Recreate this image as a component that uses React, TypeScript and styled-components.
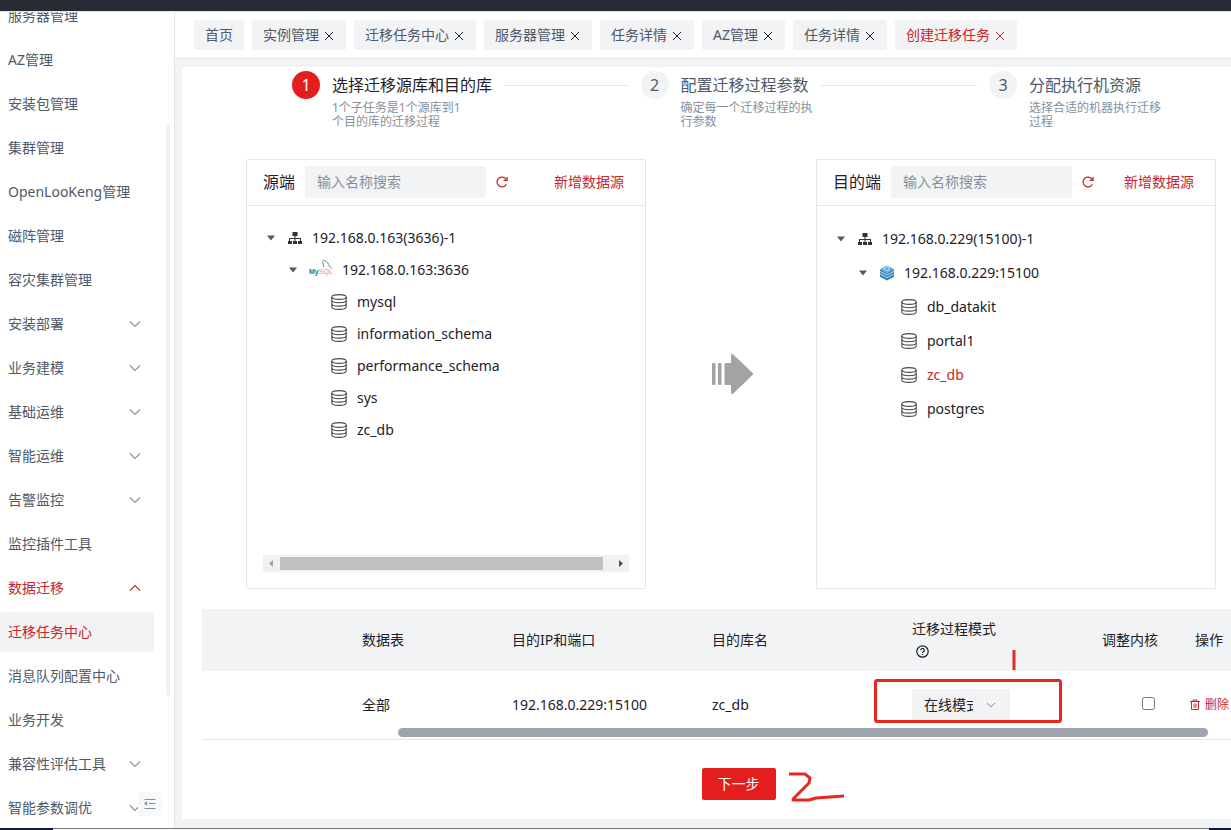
import React from 'react';
import styled, { createGlobalStyle } from 'styled-components';

const red = '#c9252d';
const primary = '#e41d1d';
const ink = '#1d2129';
const body = '#4e5969';
const muted = '#86909c';
const fill = '#f2f3f5';
const line = '#e5e6eb';
const mark = '#e8281f';

const GlobalStyle = createGlobalStyle`
  * { box-sizing: border-box; }
  body {
    margin: 0;
    background: #fff;
    color: ${ink};
    font: 14px/22px "Noto Sans", "Noto Sans CJK SC", sans-serif;
  }
  button, input, select { font: inherit; color: inherit; }
  button { border: 0; padding: 0; background: none; cursor: pointer; }
  a { text-decoration: none; color: inherit; }
  svg { display: block; flex: none; }
`;

const Shell = styled.div`
  display: flex;
  flex-direction: column;
  height: 100vh;
  overflow: hidden;
`;

const TopBar = styled.header`
  flex: none;
  height: 12px;
  background: #282a33;
  border-bottom: 1px solid ${line};
`;

const Columns = styled.div`
  flex: 1;
  display: flex;
  min-height: 0;
`;

const BottomEdge = styled.footer`
  flex: none;
  display: flex;
  justify-content: space-between;
  height: 2px;
  border-top: 1px solid #77787b;
`;

const EdgeBit = styled.span<{ $w: number }>`
  width: ${p => p.$w}px;
  height: 2px;
  margin-top: -1px;
  background: #101a30;
`;

const Sidebar = styled.aside`
  position: relative;
  flex: none;
  width: 175px;
  overflow: hidden;
  border-right: 1px solid ${line};
`;

const Menu = styled.ul`
  list-style: none;
  margin: -16px 19px 0 0;
  padding: 0;
`;

const MenuLink = styled.a<{ $active?: boolean; $selected?: boolean }>`
  display: flex;
  align-items: center;
  justify-content: space-between;
  height: 40px;
  margin: 0 1px 4px 0;
  padding: 0 12px 0 8px;
  border-radius: 0 2px 2px 0;
  color: ${p => (p.$active ? red : body)};
  background: ${p => (p.$selected ? fill : 'transparent')};
  svg { color: ${p => (p.$active ? red : muted)}; }
`;

const SideThumb = styled.div`
  position: absolute;
  top: 112px;
  right: 4px;
  width: 4px;
  height: 572px;
  border-radius: 2px;
  background: ${fill};
`;

const Collapse = styled.button`
  position: absolute;
  right: 12px;
  bottom: 12px;
  display: grid;
  place-items: center;
  width: 24px;
  height: 24px;
  border-radius: 2px;
  background: #f7f8fa;
  color: ${muted};
`;

const Main = styled.main`
  flex: 1;
  display: flex;
  flex-direction: column;
  min-width: 0;
  background: ${fill};
`;

const Tabs = styled.nav`
  display: flex;
  gap: 8px;
  flex: none;
  height: 47px;
  padding: 8px 19px;
  background: #fff;
  border-bottom: 1px solid ${line};
`;

const Tab = styled.button<{ $active?: boolean }>`
  display: flex;
  align-items: center;
  gap: 4px;
  flex: none;
  height: 30px;
  padding: 0 11px;
  border-radius: 2px;
  background: ${fill};
  color: ${p => (p.$active ? red : body)};
  svg { color: ${p => (p.$active ? red : ink)}; }
`;

const Panel = styled.section`
  flex: 1;
  display: flex;
  flex-direction: column;
  margin: 8px 0 9px 7px;
  padding-top: 4px;
  background: #fff;
  border-radius: 2px 0 0 2px;
`;

const Steps = styled.ol`
  display: grid;
  grid-template-columns: 1fr 1fr 242px;
  list-style: none;
  margin: 0;
  padding: 0 0 0 110px;
`;

const Step = styled.li`
  display: flex;
  gap: 12px;
`;

const StepNumber = styled.span<{ $active?: boolean }>`
  flex: none;
  width: 28px;
  height: 28px;
  border-radius: 50%;
  font-size: 16px;
  line-height: 28px;
  text-align: center;
  background: ${p => (p.$active ? primary : fill)};
  color: ${p => (p.$active ? '#fff' : body)};
`;

const StepBody = styled.div`
  flex: 1;
`;

const StepTitle = styled.div<{ $active?: boolean }>`
  display: flex;
  align-items: center;
  gap: 12px;
  padding-right: 12px;
  height: 28px;
  font-size: 16px;
  white-space: nowrap;
  color: ${p => (p.$active ? ink : body)};
`;

const StepLine = styled.span`
  flex: 1;
  height: 1px;
  background: ${line};
`;

const StepNote = styled.p`
  width: 140px;
  margin: 2px 0 0;
  font-size: 12px;
  line-height: 14px;
  color: ${muted};
`;

const Transfer = styled.div`
  display: flex;
  align-items: center;
  justify-content: space-between;
  margin: 30px 15px 20px 64px;
`;

const Card = styled.section`
  flex: 0 1 400px;
  display: flex;
  flex-direction: column;
  height: 430px;
  border: 1px solid ${line};
  border-radius: 2px;
`;

const CardHead = styled.div`
  display: flex;
  align-items: center;
  gap: 10px;
  height: 46px;
  padding: 0 21px 2px 16px;
  border-bottom: 1px solid ${line};
`;

const CardLabel = styled.label`
  font-size: 16px;
  line-height: 24px;
  white-space: nowrap;
`;

const Search = styled.input`
  width: 181px;
  height: 32px;
  padding: 0 12px;
  border: 0;
  border-radius: 2px;
  background: ${fill};
  &::placeholder { color: ${muted}; opacity: 1; }
`;

const RefreshButton = styled.button`
  color: ${red};
`;

const AddLink = styled.a`
  margin-left: auto;
  color: ${red};
  white-space: nowrap;
`;

const CardBody = styled.div`
  flex: 1;
  display: flex;
  flex-direction: column;
  justify-content: space-between;
  padding: 16px;
`;

const Tree = styled.ul`
  list-style: none;
  margin: 0;
  padding: 0;
`;

const TreeRow = styled.li<{ $level: number; $tall?: boolean; $on?: boolean }>`
  display: flex;
  align-items: center;
  gap: 10px;
  height: ${p => (p.$tall ? 34 : 32)}px;
  padding-left: ${p => [4, 26, 68][p.$level]}px;
  color: ${p => (p.$on ? red : ink)};
`;

const Toggle = styled.button`
  width: 11px;
`;

const ScrollTrack = styled.div`
  display: flex;
  align-items: center;
  height: 17px;
  background: #f1f1f1;
`;

const ScrollThumb = styled.div`
  flex: 1;
  height: 13px;
  margin-right: 9px;
  background: #c1c1c1;
`;

const TableWrap = styled.div`
  position: relative;
  margin-left: 20px;
  border-bottom: 1px solid ${line};
`;

const Table = styled.table`
  width: 100%;
  table-layout: fixed;
  border-collapse: collapse;
  text-align: left;
  white-space: nowrap;
  th {
    height: 62px;
    padding: 0 0 0 16px;
    font-weight: 400;
    background: ${fill};
  }
  td {
    height: 68px;
    padding: 0 0 0 16px;
  }
`;

const HelpButton = styled.button`
  display: block;
  margin-left: 4px;
  height: 22px;
`;

const ModeField = styled.div`
  position: relative;
  width: 98px;
`;

const ModeSelect = styled.select`
  display: block;
  width: 98px;
  height: 32px;
  padding: 0 37px 0 12px;
  border: 0;
  border-radius: 2px;
  appearance: none;
  background: ${fill};
`;

const ModeArrow = styled.span`
  position: absolute;
  top: 10px;
  right: 13px;
  color: ${muted};
  pointer-events: none;
`;

const Highlight = styled.div`
  position: absolute;
  top: -10px;
  left: -38px;
  width: 188px;
  height: 44px;
  border: 3px solid ${mark};
  border-radius: 3px;
`;

const Stroke = styled.svg`
  position: absolute;
  top: -40px;
  left: 100px;
`;

const KernelCheck = styled.input`
  display: block;
  width: 13px;
  height: 13px;
  margin: 0 0 4px 40px;
`;

const DeleteButton = styled.button`
  display: flex;
  align-items: center;
  gap: 5px;
  margin-left: -5px;
  font-size: 12px;
  color: ${red};
`;

const TableThumb = styled.div`
  position: absolute;
  right: 23px;
  bottom: 2px;
  width: 79%;
  max-width: 810px;
  height: 9px;
  border-radius: 5px;
  background: #9da5af;
`;

const Actions = styled.div`
  display: flex;
  justify-content: center;
  align-items: flex-start;
  gap: 12px;
  padding: 28px 0 0 134px;
`;

const Next = styled.button`
  width: 74px;
  height: 32px;
  border-radius: 2px;
  background: ${primary};
  color: #fff;
`;

const Chevron = ({ up }: { up?: boolean }) => (
  <svg width="14" height="12" viewBox="0 0 14 12" fill="none" stroke="currentColor" strokeWidth="1.1">
    <path d={up ? 'M2 8.5 7 3.5l5 5' : 'M2 3.5l5 5 5-5'} />
  </svg>
);

const Cross = () => (
  <svg width="12" height="12" viewBox="0 0 12 12" stroke="currentColor">
    <path d="M2 3l8 8M10 3l-8 8" />
  </svg>
);

const Refresh = () => (
  <svg width="12" height="12" viewBox="0 0 12 12" fill="none" stroke="currentColor" strokeWidth="1.3">
    <path d="M10.3 8.2A4.9 4.9 0 1 1 10.2 3.6" />
    <path d="M11.1 1v3.4H7.6" />
  </svg>
);

const Caret = () => (
  <Toggle aria-label="展开或收起">
    <svg width="8" height="6" viewBox="0 0 8 6" fill={body}><path d="M0 .5h8L4 5.5z" /></svg>
  </Toggle>
);

const Cluster = () => (
  <svg width="14" height="14" viewBox="0 0 14 14" fill="#303133">
    <path d="M4.500 1h5v4H7.500v2h5.500v3h1v3h-4v-3h2V8H7.500v2H9v3H5v-3h1.500V8H2v2h2v3H0v-3h1V7h5.500V5h-2z" />
  </svg>
);

const MysqlLogo = () => (
  <svg width="22" height="22" viewBox="0 0 22 22" fill="none" overflow="visible">
    <text x="-1" y="15" fontFamily="Liberation Sans, sans-serif" fontSize="7" fontWeight="700" fill="#1f7a8c">
      My<tspan fill="#eb9a3c" fontWeight="400">SQL</tspan>
    </text>
    <path stroke="#4a93a3" d="M13.500 8c.2-2.500-.8-3.500-.9-5.500.2-1.500 1.500-1.500 2.500-.6 2.300.7 3.700 3 4.200 5.100.7.900 1.700 1.400 2.200 2.500" />
  </svg>
);

const GaussLogo = () => (
  <svg width="14" height="16" viewBox="0 0 14 16">
    <path fill="#2c82b8" d="M0 4.200 7 8l7-3.800v7.600L7 15.600 0 11.800z" />
    <path fill="#4ba6d8" d="M7 .4 14 4.200 7 8 0 4.200z" />
    <path fill="none" stroke="#e6f5fc" strokeWidth=".8" d="M0 6.400 7 10l7-3.600M0 9 7 12.600 14 9M9.500 2.600 7 1.700 3.600 4 7 5.900l2.600-1.500-2-.9" />
  </svg>
);

const Database = () => (
  <svg width="16" height="16" viewBox="0 0 16 16" fill="none" stroke="#4a4a4a" strokeWidth="1.100">
    <ellipse cx="8" cy="3" rx="7.200" ry="2.400" />
    <path d="M.8 3v10c0 1.300 3.200 2.400 7.200 2.400s7.200-1.100 7.200-2.400V3M.8 6.300c0 1.300 3.200 2.400 7.200 2.400s7.200-1.100 7.200-2.400M.8 9.700c0 1.300 3.200 2.400 7.200 2.400s7.200-1.100 7.200-2.400" />
  </svg>
);

const BigArrow = () => (
  <svg width="38" height="42" viewBox="0 0 38 42" fill="#a3a3a3" overflow="visible">
    <rect x="0" y="10" width="3.500" height="22" rx="1" />
    <rect x="6" y="10" width="3.500" height="22" rx="1" />
    <path d="M13.500 10H19V2.200Q19.300.3 21 1.200L40.600 20q1 1 0 2L21 40.800q-1.700.9-2-1V32h-5.500q-1 0-1-1V11q0-1 1-1z" />
  </svg>
);

const Help = () => (
  <svg width="13" height="13" viewBox="0 0 13 13" fill="none" stroke={ink} strokeWidth="1.200">
    <circle cx="6.500" cy="6.500" r="5.700" />
    <path d="M4.700 5.300a1.800 1.800 0 1 1 2.700 1.500c-.6.4-.9.6-.9 1.200M6.500 8.900v1.200" />
  </svg>
);

const Trash = () => (
  <svg width="10" height="12" viewBox="0 0 10 12" fill="none" stroke="currentColor">
    <path d="M0 2.500h10M3 2.500v-1.500h4v1.500M1.500 2.500v8h7v-8" />
    <path d="M3.500 5h3v3.500h-3z" fill="currentColor" opacity=".5" />
  </svg>
);

const Fold = () => (
  <svg width="12" height="12" viewBox="0 0 12 12" stroke="currentColor" fill="currentColor">
    <path d="M.5 1.500h11M5 5.500h6.500M.5 10.500h11" />
    <path stroke="none" d="M0 5.500l3-2.200v4.400z" />
  </svg>
);

type MenuEntry = { text: string; arrow?: 'down' | 'up'; active?: boolean; selected?: boolean };

const menu: MenuEntry[] = [
  { text: '服务器管理' },
  { text: 'AZ管理' },
  { text: '安装包管理' },
  { text: '集群管理' },
  { text: 'OpenLooKeng管理' },
  { text: '磁阵管理' },
  { text: '容灾集群管理' },
  { text: '安装部署', arrow: 'down' },
  { text: '业务建模', arrow: 'down' },
  { text: '基础运维', arrow: 'down' },
  { text: '智能运维', arrow: 'down' },
  { text: '告警监控', arrow: 'down' },
  { text: '监控插件工具' },
  { text: '数据迁移', arrow: 'up', active: true },
  { text: '迁移任务中心', active: true, selected: true },
  { text: '消息队列配置中心' },
  { text: '业务开发' },
  { text: '兼容性评估工具', arrow: 'down' },
  { text: '智能参数调优', arrow: 'down' },
];

const tabs = ['首页', '实例管理', '迁移任务中心', '服务器管理', '任务详情', 'AZ管理', '任务详情', '创建迁移任务'];

const steps = [
  ['选择迁移源库和目的库', '1个子任务是1个源库到1个目的库的迁移过程'],
  ['配置迁移过程参数', '确定每一个迁移过程的执行参数'],
  ['分配执行机资源', '选择合适的机器执行迁移过程'],
];

type SourceProps = {
  id: string;
  label: string;
  cluster: string;
  node: string;
  logo: React.ReactNode;
  databases: string[];
  chosen?: string;
  tall?: boolean;
  scroll?: boolean;
};

const SourceCard = ({ id, label, cluster, node, logo, databases, chosen, tall, scroll }: SourceProps) => (
  <Card>
    <CardHead>
      <CardLabel htmlFor={id}>{label}</CardLabel>
      <Search id={id} placeholder="输入名称搜索" />
      <RefreshButton aria-label="刷新"><Refresh /></RefreshButton>
      <AddLink href="#">新增数据源</AddLink>
    </CardHead>
    <CardBody>
      <Tree>
        <TreeRow $level={0} $tall={tall}><Caret /><Cluster />{cluster}</TreeRow>
        <TreeRow $level={1} $tall={tall}><Caret />{logo}{node}</TreeRow>
        {databases.map(name => (
          <TreeRow key={name} $level={2} $tall={tall} $on={name === chosen}><Database />{name}</TreeRow>
        ))}
      </Tree>
      {scroll && (
        <ScrollTrack>
          <svg width="17" height="17" viewBox="0 0 17 17" fill="#a3a3a3"><path d="M10 5v7L6 8.500z" /></svg>
          <ScrollThumb />
          <svg width="17" height="17" viewBox="0 0 17 17" fill="#505050"><path d="M7 5v7l4-3.500z" /></svg>
        </ScrollTrack>
      )}
    </CardBody>
  </Card>
);

export default function App() {
  return (
    <Shell>
      <GlobalStyle />
      <TopBar />
      <Columns>
        <Sidebar>
          <Menu>
            {menu.map(m => (
              <li key={m.text}>
                <MenuLink href="#" $active={m.active} $selected={m.selected}>
                  {m.text}
                  {m.arrow && <Chevron up={m.arrow === 'up'} />}
                </MenuLink>
              </li>
            ))}
          </Menu>
          <SideThumb />
          <Collapse aria-label="收起菜单"><Fold /></Collapse>
        </Sidebar>
        <Main>
          <Tabs>
            {tabs.map((t, i) => (
              <Tab key={i} $active={i === tabs.length - 1}>
                {t}
                {i > 0 && <Cross />}
              </Tab>
            ))}
          </Tabs>
          <Panel>
            <Steps>
              {steps.map(([title, note], i) => (
                <Step key={title}>
                  <StepNumber $active={i === 0}>{i + 1}</StepNumber>
                  <StepBody>
                    <StepTitle $active={i === 0}>
                      {title}
                      {i < 2 && <StepLine />}
                    </StepTitle>
                    <StepNote>{note}</StepNote>
                  </StepBody>
                </Step>
              ))}
            </Steps>
            <Transfer>
              <SourceCard
                id="source-search"
                label="源端"
                cluster="192.168.0.163(3636)-1"
                node="192.168.0.163:3636"
                logo={<MysqlLogo />}
                databases={['mysql', 'information_schema', 'performance_schema', 'sys', 'zc_db']}
                scroll
              />
              <BigArrow />
              <SourceCard
                id="target-search"
                label="目的端"
                cluster="192.168.0.229(15100)-1"
                node="192.168.0.229:15100"
                logo={<GaussLogo />}
                databases={['db_datakit', 'portal1', 'zc_db', 'postgres']}
                chosen="zc_db"
                tall
              />
            </Transfer>
            <TableWrap>
              <Table>
                <colgroup>
                  <col />
                  <col width="150" />
                  <col width="200" />
                  <col width="200" />
                  <col width="190" />
                  <col width="93" />
                  <col width="52" />
                </colgroup>
                <thead>
                  <tr>
                    <th />
                    <th>数据表</th>
                    <th>目的IP和端口</th>
                    <th>目的库名</th>
                    <th>
                      迁移过程模式
                      <HelpButton aria-label="说明"><Help /></HelpButton>
                    </th>
                    <th>调整内核</th>
                    <th>操作</th>
                  </tr>
                </thead>
                <tbody>
                  <tr>
                    <td />
                    <td>全部</td>
                    <td>192.168.0.229:15100</td>
                    <td>zc_db</td>
                    <td>
                      <ModeField>
                        <ModeSelect aria-label="迁移过程模式" defaultValue="online">
                          <option value="online">在线模式</option>
                          <option value="offline">离线模式</option>
                        </ModeSelect>
                        <ModeArrow>
                          <svg width="12" height="12" viewBox="0 0 12 12" fill="none" stroke="currentColor">
                            <path d="M2 4l4 4 4-4" />
                          </svg>
                        </ModeArrow>
                        <Highlight />
                        <Stroke width="4" height="22" viewBox="0 0 4 22" stroke={mark} strokeWidth="3">
                          <path d="M2 1v20" />
                        </Stroke>
                      </ModeField>
                    </td>
                    <td><KernelCheck type="checkbox" aria-label="调整内核" /></td>
                    <td><DeleteButton><Trash />删除</DeleteButton></td>
                  </tr>
                </tbody>
              </Table>
              <TableThumb />
            </TableWrap>
            <Actions>
              <Next>下一步</Next>
              <svg width="58" height="36" viewBox="0 0 58 36" fill="none" stroke={mark} strokeWidth="3" strokeLinejoin="round">
                <path d="M1 6h16l5 4-1 5L6 30l-1 2h16l7-2 28-2" />
              </svg>
            </Actions>
          </Panel>
        </Main>
      </Columns>
      <BottomEdge><EdgeBit $w={53} /><EdgeBit $w={22} /></BottomEdge>
    </Shell>
  );
}
